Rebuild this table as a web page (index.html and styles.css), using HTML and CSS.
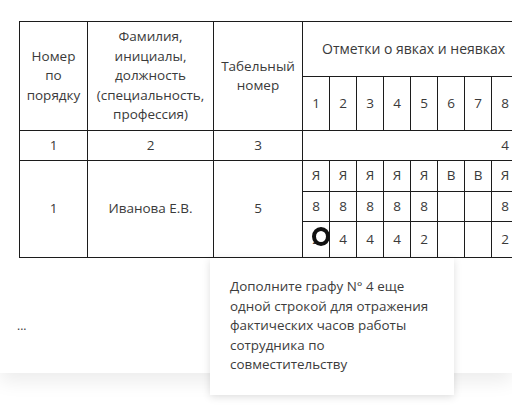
FILE: index.html
```html
<!DOCTYPE html>
<html lang="ru">
<head>
<meta charset="utf-8">
<link rel="stylesheet" href="styles.css">
</head>
<body>
<div class="card">
  <table class="sheet">
    <colgroup>
      <col class="c-num"><col class="c-name"><col class="c-tab">
      <col class="c-day"><col class="c-day"><col class="c-day"><col class="c-day"><col class="c-day">
      <col class="c-day"><col class="c-day"><col class="c-day"><col class="c-day"><col class="c-day">
      <col class="c-day"><col class="c-day"><col class="c-day"><col class="c-day"><col class="c-day">
    </colgroup>
    <tr class="h1">
      <td rowspan="2">Номер<br>по<br>порядку</td>
      <td rowspan="2">Фамилия,<br>инициалы,<br>должность<br>(специальность,<br>профессия)</td>
      <td rowspan="2">Табельный<br>номер</td>
      <td colspan="15" class="marks">Отметки о явках и неявках</td>
    </tr>
    <tr class="h2">
      <td>1</td><td>2</td><td>3</td><td>4</td><td>5</td><td>6</td><td>7</td><td>8</td>
      <td></td><td></td><td></td><td></td><td></td><td></td><td></td>
    </tr>
    <tr class="idx">
      <td>1</td><td>2</td><td>3</td><td colspan="15">4</td>
    </tr>
    <tr class="r1">
      <td rowspan="3">1</td><td rowspan="3">Иванова Е.В.</td><td rowspan="3">5</td>
      <td>Я</td><td>Я</td><td>Я</td><td>Я</td><td>Я</td><td>В</td><td>В</td><td>Я</td>
      <td></td><td></td><td></td><td></td><td></td><td></td><td></td>
    </tr>
    <tr class="r2">
      <td>8</td><td>8</td><td>8</td><td>8</td><td>8</td><td></td><td></td><td>8</td>
      <td></td><td></td><td></td><td></td><td></td><td></td><td></td>
    </tr>
    <tr class="r3">
      <td class="marked">2<span class="ring"></span></td><td>4</td><td>4</td><td>4</td><td>2</td><td></td><td></td><td>2</td>
      <td></td><td></td><td></td><td></td><td></td><td></td><td></td>
    </tr>
  </table>
  <div class="dots">...</div>
</div>
<div class="tip">Дополните графу N° 4 еще одной строкой для отражения фактических часов работы сотрудника по совместительству</div>
</body>
</html>
```
FILE: styles.css
```css
html, body {
  margin: 0;
  padding: 0;
  background: #ffffff;
  overflow: hidden;
  width: 512px;
  height: 412px;
  font-family: "Open Sans", "Liberation Sans", sans-serif;
  color: #3a3a3a;
}
.card {
  position: relative;
  height: 373px;
  padding: 21px 0 0 19px;
  box-sizing: border-box;
  background: #fff;
  overflow: hidden;
  box-shadow: 0 8px 18px rgba(0, 0, 0, 0.08);
}
.sheet {
  border-collapse: collapse;
  table-layout: fixed;
  width: 688px;
  font-size: 13.5px;
  line-height: 19.5px;
}
.sheet td {
  border: 1px solid #1c1c1c;
  text-align: center;
  vertical-align: middle;
  padding: 0;
}
.c-num { width: 68px; }
.c-name { width: 126px; }
.c-tab { width: 89px; }
.c-day { width: 27px; }
.h1 { height: 55px; }
.h2 { height: 54px; }
.idx { height: 30px; }
.r1 { height: 31px; }
.r2 { height: 30px; }
.r3 { height: 36px; }
.sheet .marks {
  text-align: left;
  padding-left: 19px;
  font-size: 14px;
  white-space: nowrap;
}
.marked { position: relative; }
.ring {
  position: absolute;
  left: 9px;
  top: 5px;
  width: 10px;
  height: 11px;
  border: 4.5px solid #111;
  border-radius: 50%;
  background: #fff;
}
.dots {
  margin-top: 61px;
  margin-left: -2px;
  font-size: 12px;
  line-height: 14px;
}
.tip {
  position: absolute;
  left: 210px;
  top: 258px;
  width: 244px;
  height: 137px;
  box-sizing: border-box;
  padding: 19px 14px 0 20px;
  background: #fff;
  box-shadow: 0 2px 8px rgba(0, 0, 0, 0.13);
  font-size: 13.4px;
  line-height: 19.5px;
  color: #3c3c3c;
}
```
